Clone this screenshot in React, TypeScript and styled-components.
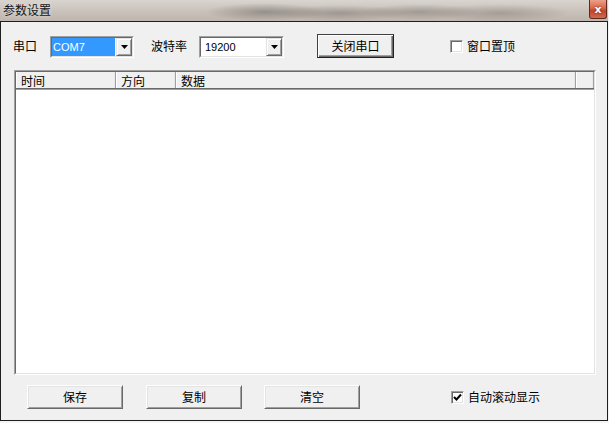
import React from "react";
import styled, { createGlobalStyle } from "styled-components";

const Global = createGlobalStyle`
  html, body { margin: 0; padding: 0; background: #f4f4f4; }
  body {
    font-family: "Noto Sans CJK SC", "Liberation Sans", sans-serif;
    font-size: 12px;
    color: #000;
  }
  * { box-sizing: border-box; }
`;

const Screen = styled.div`
  width: 609px;
  height: 423px;
  overflow: hidden;
  background: #f4f4f4;
  display: flex;
  flex-direction: column;
`;

const TitleBar = styled.div`
  height: 21px;
  flex: none;
  width: 608px;
  display: flex;
  align-items: flex-start;
  justify-content: space-between;
  padding: 0 1px 0 3px;
  background:
    radial-gradient(ellipse 60px 9px at 265px 12px, rgba(90, 85, 80, 0.45), transparent),
    radial-gradient(ellipse 70px 8px at 340px 13px, rgba(95, 90, 85, 0.4), transparent),
    radial-gradient(ellipse 60px 8px at 420px 12px, rgba(95, 90, 85, 0.38), transparent),
    radial-gradient(ellipse 70px 9px at 500px 13px, rgba(100, 95, 90, 0.35), transparent),
    linear-gradient(180deg, #d9d4cf 0%, #c9c2bb 55%, #bdb5ae 100%);
`;

const Title = styled.div`
  font-size: 12px;
  line-height: 20px;
  color: #141414;
  text-shadow: 0 0 4px rgba(255, 255, 255, 0.7);
`;

const CloseButton = styled.div`
  width: 18px;
  height: 19px;
  border: 1px solid #5e2a20;
  border-top: none;
  border-radius: 0 0 3px 3px;
  background: linear-gradient(180deg, #eca08a 0%, #d9664a 45%, #c2442a 60%, #d26a4c 100%);
  color: #fff;
  font: bold 11px "DejaVu Sans", sans-serif;
  display: flex;
  align-items: center;
  justify-content: center;
  text-shadow: 0 0 2px #5a1c10;
`;

const Frame = styled.div`
  width: 608px;
  height: 400px;
  flex: none;
  border: 1px solid #1e1e1e;
  background: #f0f0f0;
  display: flex;
  flex-direction: column;
  padding-top: 12px;
`;

const Row = styled.div<{ $pad: number; $top?: number }>`
  height: 24px;
  flex: none;
  display: flex;
  align-items: center;
  padding-left: ${(p) => p.$pad}px;
  margin-top: ${(p) => p.$top ?? 0}px;
`;

const Label = styled.span<{ $w: number; $ml?: number }>`
  width: ${(p) => p.$w}px;
  margin-left: ${(p) => p.$ml ?? 0}px;
  flex: none;
  font-size: 12px;
  line-height: 14px;
  white-space: nowrap;
`;

const Combo = styled.div<{ $w: number }>`
  width: ${(p) => p.$w}px;
  height: 22px;
  flex: none;
  border: 1px solid;
  border-color: #a0a0a0 #ffffff #ffffff #a0a0a0;
  display: flex;
  margin-top: 1px;
`;

const ComboInner = styled.div`
  flex: 1;
  display: flex;
  border: 1px solid;
  border-color: #696969 #e3e3e3 #e3e3e3 #696969;
  background: #fff;
`;

const ComboText = styled.div<{ $selected?: boolean }>`
  flex: 1;
  margin: 0 1px 0 0;
  padding-left: ${(p) => (p.$selected ? 1 : 4)}px;
  font: 11px "Liberation Sans", "DejaVu Sans", sans-serif;
  line-height: 18px;
  background: ${(p) => (p.$selected ? "#3399ff" : "#ffffff")};
  color: ${(p) => (p.$selected ? "#ffffff" : "#000000")};
`;

const DropButton = styled.div`
  width: 16px;
  flex: none;
  background: #f0f0f0;
  border: 1px solid;
  border-color: #e3e3e3 #696969 #696969 #e3e3e3;
  box-shadow: inset 1px 1px 0 #ffffff, inset -1px -1px 0 #a0a0a0;
  display: flex;
  align-items: center;
  justify-content: center;
`;

const Button = styled.div<{ $w: number; $ml?: number; $default?: boolean }>`
  width: ${(p) => p.$w}px;
  height: 24px;
  flex: none;
  margin-left: ${(p) => p.$ml ?? 0}px;
  background: #f0f0f0;
  border: 1px solid;
  border-color: ${(p) =>
    p.$default ? "#404040 #202020 #202020 #404040" : "#ffffff #696969 #696969 #ffffff"};
  box-shadow: ${(p) =>
    p.$default
      ? "inset 1px 1px 0 #ffffff, inset -1px -1px 0 #696969, inset -2px -2px 0 #a0a0a0"
      : "inset 1px 1px 0 #e3e3e3, inset -1px -1px 0 #a0a0a0"};
  display: flex;
  align-items: center;
  justify-content: center;
  font-size: 12px;
  line-height: 14px;
`;

const Check = styled.label<{ $ml: number }>`
  display: flex;
  align-items: center;
  margin-left: ${(p) => p.$ml}px;
  gap: 4px;
  font-size: 12px;
  line-height: 14px;
`;

const CheckBox = styled.span`
  width: 13px;
  height: 13px;
  flex: none;
  border: 1px solid;
  border-color: #a0a0a0 #ffffff #ffffff #a0a0a0;
  box-shadow: inset 1px 1px 0 #696969, inset -1px -1px 0 #e3e3e3;
  background: #fff;
  display: flex;
  align-items: center;
  justify-content: center;
`;

const ListBox = styled.div`
  width: 582px;
  height: 305px;
  flex: none;
  margin: 12px 0 0 13px;
  border: 1px solid;
  border-color: #a0a0a0 #ffffff #ffffff #a0a0a0;
  display: flex;
`;

const ListInner = styled.div`
  flex: 1;
  border: 1px solid;
  border-color: #696969 #e3e3e3 #e3e3e3 #696969;
  background: #ffffff;
  display: flex;
  flex-direction: column;
`;

const Header = styled.div`
  height: 17px;
  flex: none;
  display: flex;
  background: #f0f0f0;
  border-bottom: 1px solid #696969;
  box-shadow: 0 1px 0 #a0a0a0;
`;

const HeaderCell = styled.div<{ $w?: number }>`
  ${(p) => (p.$w ? `width: ${p.$w}px; flex: none;` : "flex: 1;")}
  border-left: 1px solid #ffffff;
  border-right: 1px solid #a0a0a0;
  box-shadow: inset -1px 0 0 #e8e8e8;
  padding-left: 4px;
  font-size: 12px;
  line-height: 17px;
  overflow: hidden;
  white-space: nowrap;
`;

const Arrow = () => (
  <svg width="7" height="4" viewBox="0 0 7 4">
    <polygon points="0,0 7,0 3.5,4" fill="#000" />
  </svg>
);

const Tick = () => (
  <svg width="9" height="9" viewBox="0 0 9 9">
    <path d="M1 4 L3.5 6.5 L8 1.5" stroke="#000" strokeWidth="2" fill="none" />
  </svg>
);

export default function App() {
  return (
    <>
      <Global />
      <Screen>
        <TitleBar>
          <Title>参数设置</Title>
          <CloseButton>x</CloseButton>
        </TitleBar>
        <Frame>
          <Row $pad={12}>
            <Label $w={37}>串口</Label>
            <Combo $w={84}>
              <ComboInner>
                <ComboText $selected>COM7</ComboText>
                <DropButton>
                  <Arrow />
                </DropButton>
              </ComboInner>
            </Combo>
            <Label $w={48} $ml={17}>
              波特率
            </Label>
            <Combo $w={85}>
              <ComboInner>
                <ComboText>19200</ComboText>
                <DropButton>
                  <Arrow />
                </DropButton>
              </ComboInner>
            </Combo>
            <Button $w={77} $ml={33} $default>
              关闭串口
            </Button>
            <Check $ml={56}>
              <CheckBox />
              <span>窗口置顶</span>
            </Check>
          </Row>
          <ListBox>
            <ListInner>
              <Header>
                <HeaderCell $w={100}>时间</HeaderCell>
                <HeaderCell $w={60}>方向</HeaderCell>
                <HeaderCell $w={400}>数据</HeaderCell>
                <HeaderCell />
              </Header>
            </ListInner>
          </ListBox>
          <Row $pad={26} $top={10}>
            <Button $w={96}>保存</Button>
            <Button $w={96} $ml={23}>
              复制
            </Button>
            <Button $w={96} $ml={22}>
              清空
            </Button>
            <Check $ml={91}>
              <CheckBox>
                <Tick />
              </CheckBox>
              <span>自动滚动显示</span>
            </Check>
          </Row>
        </Frame>
      </Screen>
    </>
  );
}
